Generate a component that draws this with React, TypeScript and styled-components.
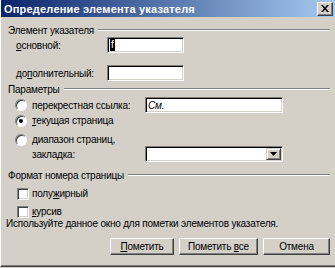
import React from 'react';
import styled, { createGlobalStyle } from 'styled-components';

const GlobalStyle = createGlobalStyle`
    body {
        margin: 0;
        background: #d4d0c8;
        font-family: "Liberation Sans", Arial, sans-serif;
        font-size: 10px;
        letter-spacing: -0.2px;
    }
`;

const App = (): JSX.Element => {
    return (
        <>
            <GlobalStyle />
            <Window>
                <TitleBar>
                    <Title>Определение элемента указателя</Title>
                    <CloseButton>
                        <svg width="8" height="7" viewBox="0 0 8 7">
                            <path d="M0 0h2l2 2.5L6 0h2L5 3.5 8 7H6L4 4.5 2 7H0l3-3.5z" fill="#000" />
                        </svg>
                    </CloseButton>
                </TitleBar>

                <Body>
                    <GroupHeader mt={7}>
                        <span>Элемент указателя</span>
                        <Etch />
                    </GroupHeader>

                    <FieldRow mt={1}>
                        <FieldLabel><u>о</u>сновной:</FieldLabel>
                        <TextBox width={77}>
                            <Selected>f</Selected>
                        </TextBox>
                    </FieldRow>

                    <FieldRow mt={12}>
                        <FieldLabel>до<u>п</u>олнительный:</FieldLabel>
                        <TextBox width={77} />
                    </FieldRow>

                    <GroupHeader mt={2}>
                        <span>Параметры</span>
                        <Etch />
                    </GroupHeader>

                    <OptionRow mt={2} height={16}>
                        <Radio />
                        <OptionLabel wide>перекрестная ссылка:</OptionLabel>
                        <TextBox width={138}>
                            <Italic>См.</Italic>
                        </TextBox>
                    </OptionRow>

                    <OptionRow mt={1} height={13}>
                        <Radio checked />
                        <OptionLabel><u>т</u>екущая страница</OptionLabel>
                    </OptionRow>

                    <OptionRow mt={6} height={13}>
                        <Radio />
                        <OptionLabel><u>д</u>иапазон страниц,</OptionLabel>
                    </OptionRow>

                    <OptionRow mt={0} height={16}>
                        <Spacer />
                        <OptionLabel wide>закладка:</OptionLabel>
                        <TextBox width={138}>
                            <DropButton>
                                <svg width="7" height="4" viewBox="0 0 7 4">
                                    <path d="M0 0h7L3.5 4z" fill="#000" />
                                </svg>
                            </DropButton>
                        </TextBox>
                    </OptionRow>

                    <GroupHeader mt={7}>
                        <span>Формат номера страницы</span>
                        <Etch />
                    </GroupHeader>

                    <OptionRow mt={6} height={13}>
                        <Check />
                        <OptionLabel>полу<u>ж</u>ирный</OptionLabel>
                    </OptionRow>

                    <OptionRow mt={5} height={13}>
                        <Check />
                        <OptionLabel><u>к</u>урсив</OptionLabel>
                    </OptionRow>

                    <Hint>Используйте данное окно для пометки элементов указателя.</Hint>

                    <Buttons>
                        <Button width={64}><span><u>П</u>ометить</span></Button>
                        <Button width={79}><span>Пометить <u>в</u>се</span></Button>
                        <Button width={67}><span>Отмена</span></Button>
                    </Buttons>
                </Body>
            </Window>
        </>
    );
};

const Window = styled.div`
    width: 335px;
    height: 267px;
    box-sizing: border-box;
    background: #d4d0c8;
    border-left: 1px solid #ffffff;
    border-bottom: 1px solid #404040;
    display: flex;
    flex-direction: column;
    color: #000;
`;

const TitleBar = styled.div`
    height: 17px;
    flex: none;
    display: flex;
    align-items: center;
    justify-content: space-between;
    padding: 0 2px 0 3px;
    background: linear-gradient(to right, #0a246a, #a6caf0);
`;

const Title = styled.div`
    color: #fff;
    font-weight: bold;
    font-size: 11px;
    letter-spacing: 0.2px;
    white-space: nowrap;
`;

const CloseButton = styled.div`
    width: 16px;
    height: 14px;
    box-sizing: border-box;
    background: #d4d0c8;
    border: 1px solid;
    border-color: #ffffff #404040 #404040 #ffffff;
    box-shadow: inset -1px -1px 0 #808080;
    display: flex;
    align-items: center;
    justify-content: center;
`;

const Body = styled.div`
    flex: 1;
    display: flex;
    flex-direction: column;
    padding: 0 5px 0 4px;
    border-bottom: 1px solid #808080;
`;

const GroupHeader = styled.div<{ mt: number }>`
    margin-top: ${(p) => p.mt}px;
    height: 12px;
    display: flex;
    align-items: center;
    gap: 4px;
    padding-left: 3px;
    white-space: nowrap;
`;

const Etch = styled.div`
    flex: 1;
    height: 0;
    border-top: 1px solid #808080;
    border-bottom: 1px solid #ffffff;
`;

const FieldRow = styled.div<{ mt: number }>`
    margin-top: ${(p) => p.mt}px;
    height: 16px;
    display: flex;
    align-items: center;
    padding-left: 11px;
`;

const FieldLabel = styled.span`
    width: 91px;
    white-space: nowrap;
`;

const TextBox = styled.div<{ width: number }>`
    width: ${(p) => p.width}px;
    height: 16px;
    box-sizing: border-box;
    background: #fff;
    border: 1px solid;
    border-color: #808080 #ffffff #ffffff #808080;
    box-shadow: inset 1px 1px 0 #000, inset -1px -1px 0 #d4d0c8;
    display: flex;
    align-items: center;
    padding-left: 2px;
    position: relative;
`;

const Selected = styled.span`
    background: #000;
    color: #fff;
    padding: 0 1px;
    line-height: 12px;
`;

const Italic = styled.span`
    font-style: italic;
`;

const DropButton = styled.div`
    position: absolute;
    right: 1px;
    top: 1px;
    bottom: 1px;
    width: 15px;
    box-sizing: border-box;
    background: #d4d0c8;
    border: 1px solid;
    border-color: #d4d0c8 #404040 #404040 #d4d0c8;
    box-shadow: inset 1px 1px 0 #fff, inset -1px -1px 0 #808080;
    display: flex;
    align-items: center;
    justify-content: center;
`;

const OptionRow = styled.div<{ mt: number; height: number }>`
    margin-top: ${(p) => p.mt}px;
    height: ${(p) => p.height}px;
    display: flex;
    align-items: center;
    padding-left: 10px;
`;

const Radio = styled.div<{ checked?: boolean }>`
    width: 12px;
    height: 12px;
    box-sizing: border-box;
    border-radius: 50%;
    background: #fff;
    border: 1px solid;
    border-color: #808080 #ffffff #ffffff #808080;
    box-shadow: inset 1px 1px 0 #404040;
    display: flex;
    align-items: center;
    justify-content: center;
    margin-right: 5px;

    &::after {
        content: '';
        width: 4px;
        height: 4px;
        border-radius: 50%;
        background: ${(p) => (p.checked ? '#000' : 'transparent')};
    }
`;

const Check = styled.div`
    width: 12px;
    height: 12px;
    box-sizing: border-box;
    background: #fff;
    border: 1px solid;
    border-color: #808080 #ffffff #ffffff #808080;
    box-shadow: inset 1px 1px 0 #404040, inset -1px -1px 0 #d4d0c8;
    margin-left: 2px;
    margin-right: 3px;
`;

const Spacer = styled.div`
    width: 17px;
`;

const OptionLabel = styled.span<{ wide?: boolean }>`
    white-space: nowrap;
    width: ${(p) => (p.wide ? '113px' : 'auto')};
`;

const Hint = styled.div`
    height: 12px;
    line-height: 12px;
    padding-left: 1px;
    white-space: nowrap;
`;

const Buttons = styled.div`
    margin-top: 8px;
    display: flex;
    justify-content: flex-end;
    gap: 5px;
`;

const Button = styled.div<{ width: number }>`
    width: ${(p) => p.width}px;
    height: 17px;
    box-sizing: border-box;
    background: #d4d0c8;
    border: 1px solid;
    border-color: #ffffff #404040 #404040 #ffffff;
    box-shadow: inset -1px -1px 0 #808080;
    display: flex;
    align-items: center;
    justify-content: center;
    white-space: nowrap;
`;

export default App;
